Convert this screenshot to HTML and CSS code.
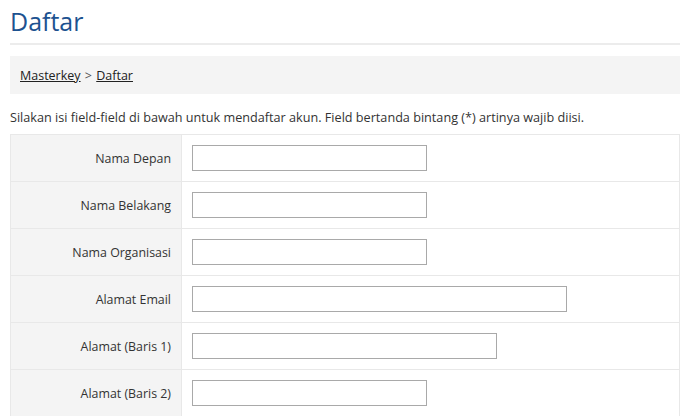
FILE: index.html
```html
<!DOCTYPE html>
<html>
<head>
<meta charset="utf-8">
<link rel="stylesheet" href="styles.css">
</head>
<body>
<div class="page">
  <h1 class="title">Daftar</h1>
  <div class="crumbs"><a href="#">Masterkey</a> &gt; <a href="#">Daftar</a></div>
  <p class="intro">Silakan isi field-field di bawah untuk mendaftar akun. Field bertanda bintang (*) artinya wajib diisi.</p>
  <table class="form">
    <tr><th>Nama Depan</th><td><input class="w235" type="text"></td></tr>
    <tr><th>Nama Belakang</th><td><input class="w235" type="text"></td></tr>
    <tr><th>Nama Organisasi</th><td><input class="w235" type="text"></td></tr>
    <tr><th>Alamat Email</th><td><input class="w375" type="text"></td></tr>
    <tr><th>Alamat (Baris 1)</th><td><input class="w305" type="text"></td></tr>
    <tr><th>Alamat (Baris 2)</th><td><input class="w235" type="text"></td></tr>
  </table>
</div>
</body>
</html>
```
FILE: styles.css
```css
html, body { margin: 0; padding: 0; background: #fff; }
body { font-family: "Open Sans", "DejaVu Sans", sans-serif; color: #333; font-size: 12px; }
.page { padding: 0 6px 0 10px; }
.title {
  margin: 0;
  padding: 6px 0 0 0;
  height: 37px;
  font-size: 25px;
  font-weight: normal;
  line-height: 30px;
  color: #1d5290;
  border-bottom: 2px solid #ececec;
}
.crumbs {
  margin-top: 11px;
  background: #f4f4f4;
  height: 38px;
  line-height: 40px;
  padding-left: 10px;
  font-size: 12.5px;
  color: #555;
  word-spacing: 1px;
}
.crumbs a { color: #222; text-decoration: underline; }
.intro { margin: 14px 0 0 0; height: 26px; line-height: 18px; font-size: 12.65px; color: #333; }
.form { border-collapse: collapse; width: 670px; }
.form th, .form td { border: 1px solid #e8e8e8; height: 46px; padding: 0; }
.form th {
  width: 160px;
  background: #f4f4f4;
  text-align: right;
  font-weight: normal;
  padding-right: 10px;
  font-size: 12.4px;
  color: #333;
}
.form td { padding-left: 10px; }
.form input {
  display: block;
  box-sizing: border-box;
  height: 26px;
  border: 1px solid #a9a9a9;
  margin: 0;
  padding: 0;
  background: #fff;
}
.w235 { width: 235px; }
.w305 { width: 305px; }
.w375 { width: 375px; }
```
